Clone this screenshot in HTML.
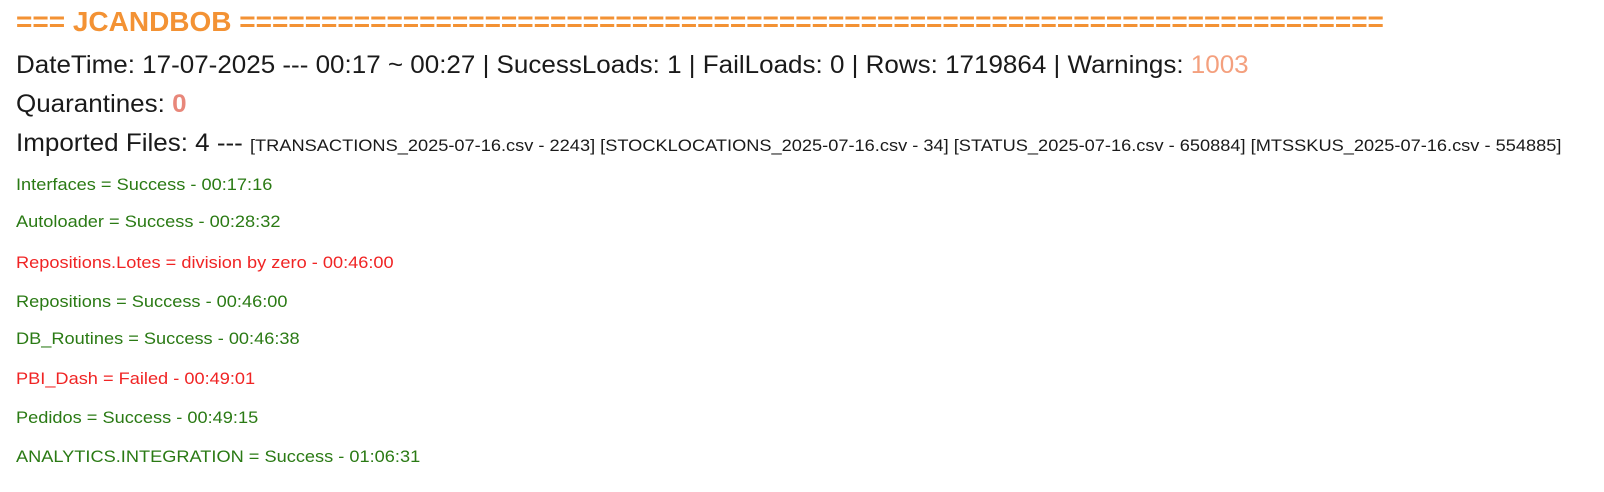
<!DOCTYPE html>
<html><head><style>
body{margin:0;width:1604px;height:492px;background:#fff;font-family:"Liberation Sans",Arial,sans-serif;position:relative;overflow:hidden}
div{position:absolute;left:16px;white-space:nowrap;line-height:1;transform-origin:0 50%}
.t{font-size:28px;font-weight:bold;color:#f39234;top:8px}
.b{font-size:25px;color:#1a1a1a;transform:scaleX(1.04)}
.s{font-size:17px;color:#1a1a1a;display:inline-block;transform:scaleX(1.03);transform-origin:0 50%}
.g{font-size:17px;color:#2a7a14;transform:scaleX(1.07)}
.r{font-size:17px;color:#f02424;transform:scaleX(1.07)}
</style></head><body>
<div class="t">=== JCANDBOB ======================================================================</div>
<div class="b" style="top:53px">DateTime: 17-07-2025 --- 00:17 ~ 00:27 | SucessLoads: 1 | FailLoads: 0 | Rows: 1719864 | Warnings: <span style="color:#f4a07e">1003</span></div>
<div class="b" style="top:92px">Quarantines: <b style="color:#e8877a">0</b></div>
<div class="b" style="top:131px">Imported Files: 4 --- <span class="s">[TRANSACTIONS_2025-07-16.csv - 2243] [STOCKLOCATIONS_2025-07-16.csv - 34] [STATUS_2025-07-16.csv - 650884] [MTSSKUS_2025-07-16.csv - 554885]</span></div>
<div class="g" style="top:176px">Interfaces = Success - 00:17:16</div>
<div class="g" style="top:213px">Autoloader = Success - 00:28:32</div>
<div class="r" style="top:254px">Repositions.Lotes = division by zero - 00:46:00</div>
<div class="g" style="top:293px">Repositions = Success - 00:46:00</div>
<div class="g" style="top:330px">DB_Routines = Success - 00:46:38</div>
<div class="r" style="top:370px">PBI_Dash = Failed - 00:49:01</div>
<div class="g" style="top:409px">Pedidos = Success - 00:49:15</div>
<div class="g" style="top:448px">ANALYTICS.INTEGRATION = Success - 01:06:31</div>
</body></html>
